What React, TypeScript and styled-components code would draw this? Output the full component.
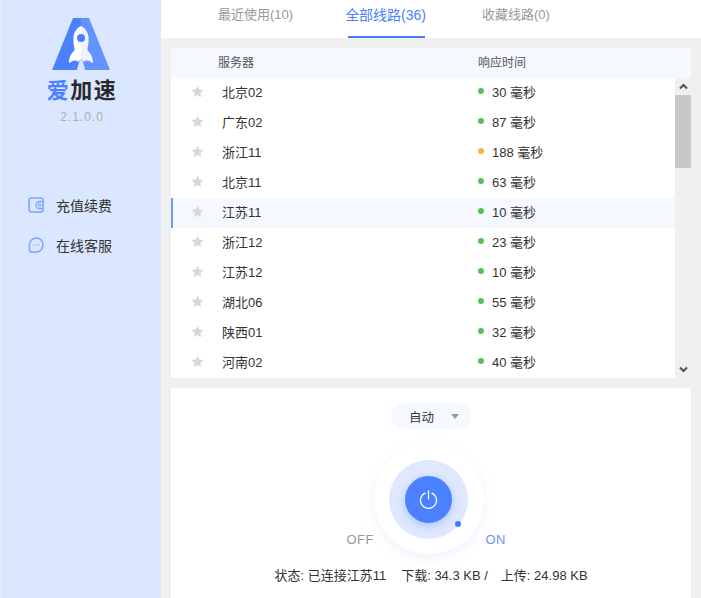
import React from "react";
import styled, { createGlobalStyle } from "styled-components";

const Global = createGlobalStyle`
  html, body { margin: 0; padding: 0; height: 100%; background: #f0f0f0; }
  body { font-family: "Liberation Sans", "Noto Sans CJK SC", sans-serif; font-size: 13px; color: #333; overflow: hidden; }
`;

const Shell = styled.div`
  display: flex;
  width: 701px;
  height: 598px;
  overflow: hidden;
`;

const Sidebar = styled.aside`
  width: 160px;
  flex: none;
  background: #dbe6ff;
  border-left: 1px solid #ececec;
  display: flex;
  flex-direction: column;
  align-items: center;
  padding-top: 18px;
`;

const Brand = styled.div`
  display: flex;
  font-size: 22px;
  line-height: 24px;
  font-weight: 700;
  letter-spacing: 1.5px;
  color: #2a2a2e;
  margin-top: 9px;
  margin-left: 2px;
`;

const BrandAccent = styled.span`
  color: #4b80ff;
`;

const Version = styled.div`
  margin-top: 7px;
  margin-left: 2px;
  font-size: 12px;
  line-height: 14px;
  letter-spacing: 1px;
  color: #aeaeae;
`;

const Menu = styled.nav`
  align-self: stretch;
  margin-top: 71px;
  padding-left: 27px;
  display: flex;
  flex-direction: column;
  gap: 20px;
`;

const MenuItem = styled.div`
  display: flex;
  align-items: center;
  height: 20px;
  gap: 12px;
  font-size: 14px;
  color: #333;
`;

const Main = styled.main`
  flex: 1;
  min-width: 0;
  display: flex;
  flex-direction: column;
`;

const Tabs = styled.div`
  height: 38px;
  flex: none;
  background: #fff;
  display: flex;
  padding-left: 57px;
  gap: 52px;
`;

const Tab = styled.div<{ $active?: boolean }>`
  position: relative;
  height: 38px;
  box-sizing: border-box;
  padding-top: 6px;
  margin-right: ${(p) => (p.$active ? "4px" : "0")};
  line-height: 18px;
  font-size: ${(p) => (p.$active ? "14px" : "13px")};
  white-space: nowrap;
  color: ${(p) => (p.$active ? "#4b80ff" : "#999")};

  &::after {
    content: "";
    display: ${(p) => (p.$active ? "block" : "none")};
    position: absolute;
    left: 3px;
    right: 1px;
    bottom: 0;
    height: 2px;
    background: #4b7bf5;
  }
`;

const Content = styled.div`
  flex: 1;
  min-height: 0;
  padding: 10px 10px 0;
  display: flex;
  flex-direction: column;
  gap: 10px;
`;

const ListPanel = styled.section`
  height: 330px;
  flex: none;
  background: #fff;
  display: flex;
  flex-direction: column;
`;

const HeaderRow = styled.div`
  height: 30px;
  flex: none;
  box-sizing: border-box;
  padding-bottom: 4px;
  background: #f5f8ff;
  display: flex;
  align-items: center;
  color: #555;
  font-size: 12px;
`;

const HeaderServer = styled.div`
  width: 307px;
  padding-left: 47px;
  box-sizing: border-box;
  flex: none;
`;

const ListBody = styled.div`
  flex: 1;
  min-height: 0;
  display: flex;
`;

const Rows = styled.div`
  flex: 1;
  min-width: 0;
`;

const Row = styled.div<{ $selected?: boolean }>`
  height: 30px;
  box-sizing: border-box;
  padding-bottom: 4px;
  display: flex;
  align-items: center;
  background: ${(p) => (p.$selected ? "#f5f8ff" : "#fff")};
  box-shadow: ${(p) => (p.$selected ? "inset 2px 0 0 #6d9bf7" : "none")};
`;

const StarCell = styled.div`
  width: 51px;
  flex: none;
  padding-left: 20px;
  box-sizing: border-box;
  display: flex;
  align-items: center;
`;

const ServerName = styled.div`
  width: 256px;
  flex: none;
  color: #333;
`;

const Latency = styled.div`
  display: flex;
  align-items: center;
  gap: 8px;
  color: #333;
`;

const Dot = styled.span<{ $color: string }>`
  width: 6px;
  height: 6px;
  border-radius: 50%;
  background: ${(p) => p.$color};
`;

const Scrollbar = styled.div`
  width: 16px;
  flex: none;
  background: #f0f0f0;
  display: flex;
  flex-direction: column;
  align-items: stretch;
`;

const ScrollButton = styled.div`
  height: 17px;
  display: flex;
  align-items: center;
  justify-content: center;
  flex: none;
`;

const Thumb = styled.div`
  height: 73px;
  flex: none;
  background: #c8c8c8;
`;

const ScrollSpacer = styled.div`
  flex: 1;
`;

const ControlPanel = styled.section`
  flex: 1;
  min-height: 0;
  background: #fff;
  display: flex;
  flex-direction: column;
  align-items: center;
`;

const ModeSelect = styled.div`
  margin-top: 15px;
  width: 80px;
  height: 26px;
  box-sizing: border-box;
  border-radius: 13px;
  background: #f5f8ff;
  display: flex;
  align-items: center;
  padding-left: 18px;
  gap: 17px;
  font-size: 12.5px;
  color: #333;
`;

const Caret = styled.span`
  width: 0;
  height: 0;
  border-left: 4.5px solid transparent;
  border-right: 4.5px solid transparent;
  border-top: 5px solid #999;
`;

const PowerArea = styled.div`
  position: relative;
  width: 300px;
  height: 110px;
  margin: 15px 5px 0 0;
  display: flex;
  justify-content: center;
`;

const Halo = styled.div`
  width: 110px;
  height: 110px;
  border-radius: 50%;
  background: #fff;
  box-shadow: 0 4px 14px rgba(120, 150, 230, 0.12);
  display: flex;
  align-items: center;
  justify-content: center;
`;

const Ring = styled.div`
  width: 79px;
  height: 79px;
  border-radius: 50%;
  background: #dfe8fe;
  display: flex;
  align-items: center;
  justify-content: center;
`;

const PowerButton = styled.button`
  width: 47px;
  height: 47px;
  padding: 0;
  border: 0;
  border-radius: 50%;
  background: #4b80ff;
  box-shadow: 0 3px 8px rgba(75, 128, 255, 0.35);
  display: flex;
  align-items: center;
  justify-content: center;
`;

const Indicator = styled.span`
  position: absolute;
  left: 176px;
  top: 77px;
  width: 6px;
  height: 6px;
  border-radius: 50%;
  background: #3f7bff;
`;

const SwitchLabel = styled.span<{ $on?: boolean }>`
  position: absolute;
  top: 88px;
  left: ${(p) => (p.$on ? "207px" : "68px")};
  font-size: 13px;
  line-height: 16px;
  letter-spacing: 0.5px;
  color: ${(p) => (p.$on ? "#6f93f5" : "#999")};
`;

const Status = styled.div`
  margin-top: 13px;
  display: flex;
  font-size: 13px;
  line-height: 18px;
  color: #333;
  white-space: pre;
`;

const StatusPart = styled.span<{ $gap?: number }>`
  margin-left: ${(p) => p.$gap ?? 0}px;
`;

const Star = () => (
  <svg width="13" height="13" viewBox="0 0 24 24" aria-hidden="true">
    <path fill="#d8d8d8" d="M12 1.2l3.3 7.2 7.8.9-5.8 5.3 1.6 7.8L12 18.5l-6.9 3.9 1.6-7.8L.9 9.3l7.8-.9z" />
  </svg>
);

const Logo = () => (
  <svg width="58" height="52" viewBox="0 0 58 52" aria-hidden="true">
    <path fill="#4b80ff" d="M21 0h8v41c-2 2-3 6-4 11H0z" />
    <path fill="#6393ff" d="M29 0h8l21 52H33c-1-5-2-9-4-11z" />
    <path fill="#fff" d="M29 8c-4 2-7 6-7.500 11-.5 5 .5 9 1.200 13-3 3-5.700 7-5.700 12 0 1 .7 1 1.200.6 1.500-1.300 3-2 4.500-2 1.500 0 2.500.5 3.300 1.400L29 41z" />
    <path fill="#eef3ff" d="M29 8c4 2 7 6 7.500 11 .5 5-.5 9-1.200 13 3 3 5.700 7 5.700 12 0 1-.7 1-1.200.6-1.500-1.300-3-2-4.500-2-1.500 0-2.500.5-3.300 1.400L29 41z" />
    <circle cx="29" cy="20" r="4" fill="#4b80ff" />
  </svg>
);

const WalletIcon = () => (
  <svg width="16" height="16" viewBox="0 0 16 16" fill="none" stroke="#7ea3ff" strokeWidth="1.6" aria-hidden="true">
    <path d="M3 1h10c1.100 0 2 .9 2 2v10c0 1.100-.9 2-2 2H4c-1.700 0-3-1.300-3-3V3c0-1.100.9-2 2-2z" />
    <path d="M15 4.500h-3.500a3.500 3.500 0 0 0 0 7H15" strokeWidth="1.300" />
    <circle cx="11.500" cy="8" r="1.200" strokeWidth="1.100" />
  </svg>
);

const ChatIcon = () => (
  <svg width="16" height="16" viewBox="0 0 16 16" fill="none" stroke="#7ea3ff" strokeWidth="1.5" aria-hidden="true">
    <path d="M8.500 1a6.500 7 0 0 1 0 14H2.800C1.800 15 1.500 14.200 1.500 13.400V8A7 7 0 0 1 8.500 1z" />
    <path d="M5.300 8h.9M7.900 8h.9M10.500 8h.9" strokeWidth="1.300" />
  </svg>
);

const Chevron = ({ up }: { up?: boolean }) => (
  <svg width="9" height="7" viewBox="0 0 9 7" aria-hidden="true">
    <path d={up ? "M1 5.500l3.500-3.500 3.500 3.500" : "M1 1.500l3.500 3.500 3.500-3.500"} fill="none" stroke="#505050" strokeWidth="2" />
  </svg>
);

const PowerIcon = () => (
  <svg width="19" height="19" viewBox="0 0 19 19" fill="none" stroke="#fff" strokeWidth="1.300" strokeLinecap="round" aria-hidden="true">
    <path d="M6 3.200a8 8 0 1 0 7 0" />
    <path d="M9.500 1v8" />
  </svg>
);

const GREEN = "#55c353";
const ORANGE = "#f6b23f";

const servers = [
  { name: "北京02", ms: 30, color: GREEN },
  { name: "广东02", ms: 87, color: GREEN },
  { name: "浙江11", ms: 188, color: ORANGE },
  { name: "北京11", ms: 63, color: GREEN },
  { name: "江苏11", ms: 10, color: GREEN, selected: true },
  { name: "浙江12", ms: 23, color: GREEN },
  { name: "江苏12", ms: 10, color: GREEN },
  { name: "湖北06", ms: 55, color: GREEN },
  { name: "陕西01", ms: 32, color: GREEN },
  { name: "河南02", ms: 40, color: GREEN },
];

export default function App() {
  return (
    <Shell>
      <Global />
      <Sidebar>
        <Logo />
        <Brand>
          <BrandAccent>爱</BrandAccent>加速
        </Brand>
        <Version>2.1.0.0</Version>
        <Menu>
          <MenuItem>
            <WalletIcon />
            充值续费
          </MenuItem>
          <MenuItem>
            <ChatIcon />
            在线客服
          </MenuItem>
        </Menu>
      </Sidebar>
      <Main>
        <Tabs>
          <Tab>最近使用(10)</Tab>
          <Tab $active>全部线路(36)</Tab>
          <Tab>收藏线路(0)</Tab>
        </Tabs>
        <Content>
          <ListPanel>
            <HeaderRow>
              <HeaderServer>服务器</HeaderServer>
              <div>响应时间</div>
            </HeaderRow>
            <ListBody>
              <Rows>
                {servers.map((s) => (
                  <Row key={s.name} $selected={s.selected}>
                    <StarCell>
                      <Star />
                    </StarCell>
                    <ServerName>{s.name}</ServerName>
                    <Latency>
                      <Dot $color={s.color} />
                      {s.ms} 毫秒
                    </Latency>
                  </Row>
                ))}
              </Rows>
              <Scrollbar>
                <ScrollButton>
                  <Chevron up />
                </ScrollButton>
                <Thumb />
                <ScrollSpacer />
                <ScrollButton>
                  <Chevron />
                </ScrollButton>
              </Scrollbar>
            </ListBody>
          </ListPanel>
          <ControlPanel>
            <ModeSelect>
              自动
              <Caret />
            </ModeSelect>
            <PowerArea>
              <Halo>
                <Ring>
                  <PowerButton aria-label="power">
                    <PowerIcon />
                  </PowerButton>
                </Ring>
              </Halo>
              <Indicator />
              <SwitchLabel>OFF</SwitchLabel>
              <SwitchLabel $on>ON</SwitchLabel>
            </PowerArea>
            <Status>
              <StatusPart>状态: 已连接江苏11</StatusPart>
              <StatusPart $gap={15}>下载: 34.3 KB /</StatusPart>
              <StatusPart $gap={13}>上传: 24.98 KB</StatusPart>
            </Status>
          </ControlPanel>
        </Content>
      </Main>
    </Shell>
  );
}
